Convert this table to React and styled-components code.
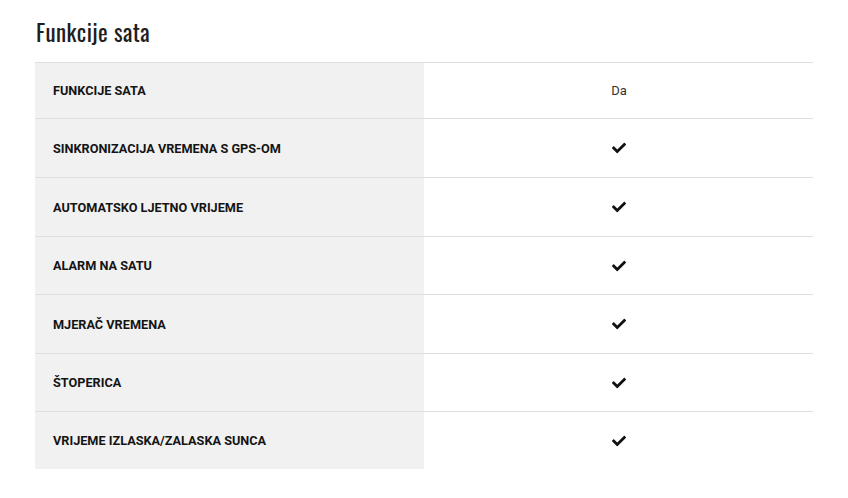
import React from "react";
import styled, { createGlobalStyle } from "styled-components";
import { FaCheck } from "react-icons/fa";

const Global = createGlobalStyle`
  html, body { margin: 0; padding: 0; background: #fff; }
  body { font-family: Roboto, "Liberation Sans", sans-serif; color: #222; }
`;

const Page = styled.div`
  padding: 16px 35px 0 35px;
  width: 778px;
`;

const Title = styled.h2`
  margin: 0 0 14px 1px;
  font-family: "Oswald", "Liberation Sans Narrow", "DejaVu Sans Condensed", sans-serif;
  font-stretch: condensed;
  font-weight: 400;
  font-size: 23px;
  line-height: 32px;
  color: #1e1e1e;
  letter-spacing: 0.45px;
`;

const Table = styled.div`
  display: grid;
  grid-template-columns: 389px 389px;
`;

const Row = styled.div`
  display: contents;
`;

const Label = styled.div`
  background: #f1f1f1;
  border-top: 1px solid #dedede;
  height: ${(p) => p.$h}px;
  display: flex;
  align-items: center;
  padding-left: 18px;
  font-family: Roboto, "Liberation Sans", sans-serif;
  font-size: 12.7px;
  font-weight: 700;
  color: #141414;
`;

const Value = styled.div`
  border-top: 1px solid #dedede;
  height: ${(p) => p.$h}px;
  display: flex;
  align-items: center;
  justify-content: center;
  font-family: Roboto, "Liberation Sans", sans-serif;
  font-size: 13px;
  color: #333;
  padding-left: 1px;
`;

const rows = [
  ["FUNKCIJE SATA", "Da", 55],
  ["SINKRONIZACIJA VREMENA S GPS-OM", true, 58],
  ["AUTOMATSKO LJETNO VRIJEME", true, 58],
  ["ALARM NA SATU", true, 57],
  ["MJERAČ VREMENA", true, 58],
  ["ŠTOPERICA", true, 57],
  ["VRIJEME IZLASKA/ZALASKA SUNCA", true, 57],
];

export default function App() {
  return (
    <>
      <Global />
      <Page>
        <Title>Funkcije sata</Title>
        <Table>
          {rows.map(([label, val, h]) => (
            <Row key={label}>
              <Label $h={h}>{label}</Label>
              <Value $h={h}>
                {val === true ? <FaCheck size={14} color="#111" /> : val}
              </Value>
            </Row>
          ))}
        </Table>
      </Page>
    </>
  );
}
